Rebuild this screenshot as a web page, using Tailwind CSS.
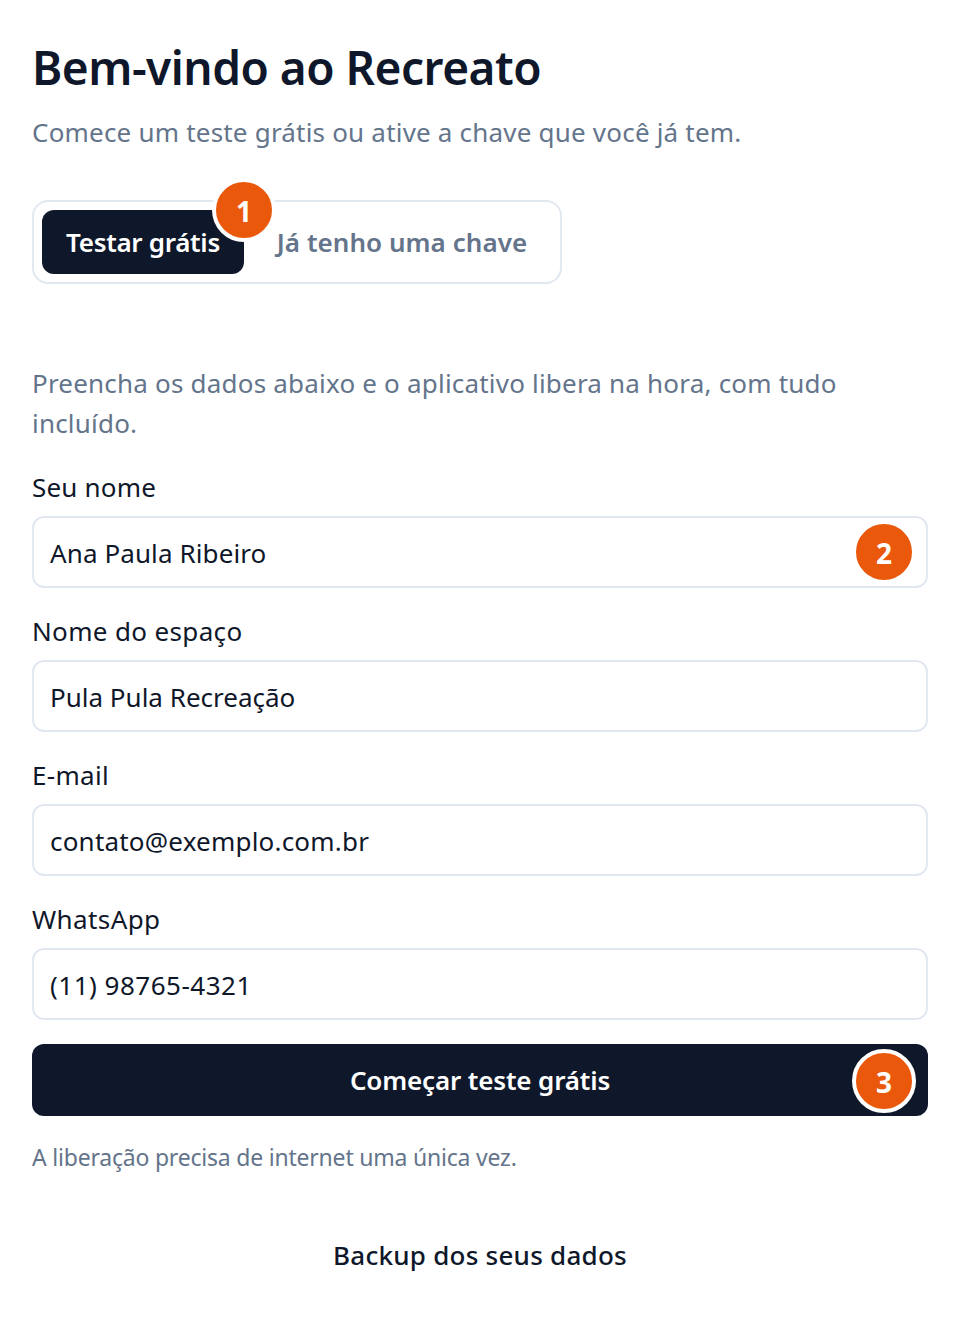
<!DOCTYPE html>
<html lang="pt-BR">
<head>
<meta charset="UTF-8">
<script src="https://cdn.jsdelivr.net/npm/@tailwindcss/browser@4"></script>
<title>Bem-vindo ao Recreato</title>
</head>
<body class="bg-white font-['Noto_Sans',sans-serif] h-[1324px] overflow-hidden">
<div class="px-8 pt-[32px]">
	<h1 class="text-[46px] leading-[70px] font-semibold tracking-[-0.5px] text-[#0f172a]">Bem-vindo ao Recreato</h1>
	<p class="mt-[7px] text-[26px] leading-[46px] tracking-[0.2px] text-[#64748b]">Comece um teste grátis ou ative a chave que você já tem.</p>

	<div class="relative mt-[45px] w-[530px] h-[84px] flex gap-2 p-2 border-2 border-[#e2e8f0] rounded-2xl">
		<div class="w-[202px] h-[64px] flex items-center justify-center rounded-xl bg-[#0f172a] text-white text-[26px] font-semibold tracking-[-0.3px]">Testar grátis</div>
		<div class="flex-1 h-[64px] flex items-center justify-center text-[#64748b] text-[26px] font-semibold tracking-[0.05px]">Já tenho uma chave</div>
		<span class="absolute left-[178px] top-[-24px] w-[64px] h-[64px] flex items-center justify-center pt-0.5 rounded-full bg-[#ea580c] border-4 border-white text-white text-[28px] font-bold">1</span>
	</div>

	<p class="mt-[79px] text-[26px] leading-[40px] tracking-[0.2px] text-[#64748b]">Preencha os dados abaixo e o aplicativo libera na hora, com tudo incluído.</p>

	<label class="block mt-[24px] text-[26px] leading-[40px] tracking-[0.2px] text-[#0f172a]">Seu nome</label>
	<div class="relative mt-[9px] h-[72px] flex items-center pt-0.5 px-4 border-2 border-[#e2e8f0] rounded-xl text-[26px] tracking-[0.1px] text-[#0f172a]">Ana Paula Ribeiro
		<span class="absolute right-[10px] top-[2px] w-[64px] h-[64px] flex items-center justify-center pt-0.5 rounded-full bg-[#ea580c] border-4 border-white text-white text-[28px] font-bold">2</span>
	</div>

	<label class="block mt-[23px] text-[26px] leading-[40px] tracking-[0.35px] text-[#0f172a]">Nome do espaço</label>
	<div class="mt-[9px] h-[72px] flex items-center pt-0.5 px-4 border-2 border-[#e2e8f0] rounded-xl text-[26px] text-[#0f172a]">Pula Pula Recreação</div>

	<label class="block mt-[23px] text-[26px] leading-[40px] tracking-[0.3px] text-[#0f172a]">E-mail</label>
	<div class="mt-[9px] h-[72px] flex items-center pt-0.5 px-4 border-2 border-[#e2e8f0] rounded-xl text-[26px] tracking-[0.2px] text-[#0f172a]">contato@exemplo.com.br</div>

	<label class="block mt-[23px] text-[26px] leading-[40px] tracking-[0.4px] text-[#0f172a]">WhatsApp</label>
	<div class="mt-[9px] h-[72px] flex items-center pt-0.5 px-4 border-2 border-[#e2e8f0] rounded-xl text-[26px] tracking-[0.5px] text-[#0f172a]">(11) 98765-4321</div>

	<div class="relative mt-[24px] h-[72px] flex items-center justify-center rounded-xl bg-[#0f172a] text-white text-[26px] font-semibold tracking-[-0.15px]">Começar teste grátis
		<span class="absolute right-[12px] top-[5px] w-[64px] h-[64px] flex items-center justify-center pt-0.5 rounded-full bg-[#ea580c] border-4 border-white text-white text-[28px] font-bold">3</span>
	</div>

	<p class="mt-[21px] text-[23px] leading-[40px] tracking-[-0.21px] text-[#64748b]">A liberação precisa de internet uma única vez.</p>

	<p class="mt-[58px] text-center text-[26px] leading-[40px] font-medium tracking-[0.25px] text-[#0f172a]">Backup dos seus dados</p>
</div>
</body>
</html>
